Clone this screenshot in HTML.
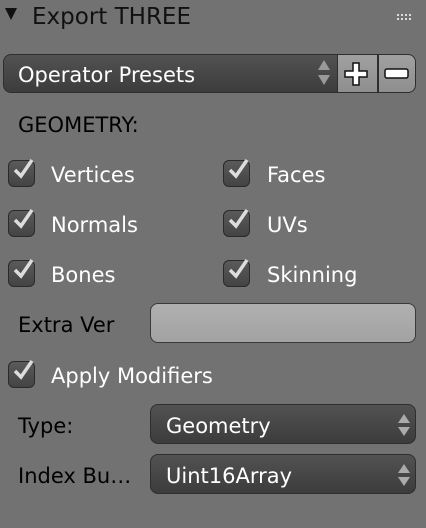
<!DOCTYPE html>
<html><head><style>
body{margin:0;width:426px;height:528px;background:#727272;font-family:"DejaVu Sans","Liberation Sans",sans-serif;position:relative;overflow:hidden;color:#000}
.a{position:absolute;white-space:nowrap}
.t{font-size:21px;line-height:20px}
.w{color:#fff}
.dd{position:absolute;border:1.5px solid #2e2e2e;border-radius:8px;background:linear-gradient(#525252,#3c3c3c);box-sizing:border-box}
.cb{position:absolute;width:27px;height:27px;box-sizing:border-box;border:1.5px solid #2a2a2a;border-radius:6px;background:linear-gradient(#5a5a5a,#444)}
.cb svg{position:absolute;left:3px;top:-4px}
.ar{position:absolute;right:5px;top:9px}
</style></head><body>
<svg class="a" style="left:5px;top:8px" width="12" height="14"><polygon points="0,0 12,0 6,12" fill="#111"/></svg>
<div class="a" style="left:32px;top:4px;font-size:23px;line-height:26px;color:#111">Export THREE</div>
<svg class="a" style="left:397px;top:14px" width="16" height="7"><g fill="#ddd"><rect x="0" y="0" width="2" height="2"/><rect x="4" y="0" width="2" height="2"/><rect x="8" y="0" width="2" height="2"/><rect x="12" y="0" width="2" height="2"/><rect x="0" y="4" width="2" height="2"/><rect x="4" y="4" width="2" height="2"/><rect x="8" y="4" width="2" height="2"/><rect x="12" y="4" width="2" height="2"/></g></svg>

<div class="dd" style="left:3px;top:54px;width:413px;height:39px;overflow:hidden">
 <div style="position:absolute;left:333px;top:0;width:80px;height:39px;background:linear-gradient(#a0a0a0,#8e8e8e);border-left:1.5px solid #2e2e2e"></div>
 <div style="position:absolute;left:373px;top:0;width:1.5px;height:39px;background:#2e2e2e"></div>
</div>
<div class="a t w" style="left:18px;top:65px">Operator Presets</div>
<svg class="a" style="left:318px;top:60px" width="12" height="26"><polygon points="6,0 12,10 0,10" fill="#999"/><polygon points="0,15 12,15 6,25" fill="#999"/></svg>
<svg class="a" style="left:344px;top:62px" width="24" height="24"><path d="M9 1h6v8h8v6h-8v8h-6v-8h-8v-6h8z" fill="#fff" stroke="#111" stroke-width="1.5"/></svg>
<svg class="a" style="left:384px;top:68px" width="26" height="12"><rect x="1" y="1" width="23" height="9" rx="2" fill="#fff" stroke="#111" stroke-width="1.5"/></svg>

<div class="a t" style="left:18px;top:115px">GEOMETRY:</div>

<div class="cb" style="left:8px;top:160px"><svg width="26" height="24"><path d="M3 13l6 6 11-16" fill="none" stroke="#ddd" stroke-width="3.5"/></svg></div>
<div class="a t w" style="left:51px;top:165px">Vertices</div>
<div class="cb" style="left:223px;top:160px"><svg width="26" height="24"><path d="M3 13l6 6 11-16" fill="none" stroke="#ddd" stroke-width="3.5"/></svg></div>
<div class="a t w" style="left:267px;top:165px">Faces</div>

<div class="cb" style="left:8px;top:210px"><svg width="26" height="24"><path d="M3 13l6 6 11-16" fill="none" stroke="#ddd" stroke-width="3.5"/></svg></div>
<div class="a t w" style="left:51px;top:215px">Normals</div>
<div class="cb" style="left:223px;top:210px"><svg width="26" height="24"><path d="M3 13l6 6 11-16" fill="none" stroke="#ddd" stroke-width="3.5"/></svg></div>
<div class="a t w" style="left:267px;top:215px">UVs</div>

<div class="cb" style="left:8px;top:260px"><svg width="26" height="24"><path d="M3 13l6 6 11-16" fill="none" stroke="#ddd" stroke-width="3.5"/></svg></div>
<div class="a t w" style="left:51px;top:265px">Bones</div>
<div class="cb" style="left:223px;top:260px"><svg width="26" height="24"><path d="M3 13l6 6 11-16" fill="none" stroke="#ddd" stroke-width="3.5"/></svg></div>
<div class="a t w" style="left:267px;top:265px">Skinning</div>

<div class="a t" style="left:18px;top:315px">Extra Ver</div>
<div class="dd" style="left:150px;top:303px;width:266px;height:40px;background:linear-gradient(#b0b0b0,#a2a2a2);border-color:#3a3a3a"></div>

<div class="cb" style="left:8px;top:361px"><svg width="26" height="24"><path d="M3 13l6 6 11-16" fill="none" stroke="#ddd" stroke-width="3.5"/></svg></div>
<div class="a t w" style="left:51px;top:366px">Apply Modifiers</div>

<div class="a t" style="left:18px;top:416px">Type:</div>
<div class="dd" style="left:150px;top:404px;width:266px;height:40px"><svg class="ar" width="12" height="22"><polygon points="6,0 12,9 0,9" fill="#aaa"/><polygon points="0,13 12,13 6,22" fill="#aaa"/></svg></div>
<div class="a t w" style="left:166px;top:416px">Geometry</div>

<div class="a t" style="left:18px;top:466px">Index Bu…</div>
<div class="dd" style="left:150px;top:454px;width:266px;height:40px"><svg class="ar" width="12" height="22"><polygon points="6,0 12,9 0,9" fill="#aaa"/><polygon points="0,13 12,13 6,22" fill="#aaa"/></svg></div>
<div class="a t w" style="left:166px;top:466px">Uint16Array</div>
</body></html>
